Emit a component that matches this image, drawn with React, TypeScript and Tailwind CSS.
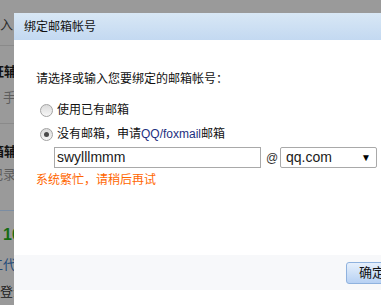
const font = "font-['Liberation_Sans','Noto_Sans_CJK_SC',sans-serif]";

function Radio({ checked }: { checked?: boolean }) {
  return (
    <span className="flex h-[13px] w-[13px] shrink-0 items-center justify-center rounded-full border border-[#a3a3a3] bg-gradient-to-b from-[#dadada] to-[#f7f7f7]">
      {checked && <span className="h-[5px] w-[5px] rounded-full bg-[#4a4a4a]" />}
    </span>
  );
}

export default function App() {
  return (
    <div className={`flex h-[305px] w-[381px] flex-col overflow-hidden bg-[#9a9a9a] ${font}`}>
      <div className="h-[13px] shrink-0" />
      <div className="flex min-h-0 flex-1">
        {/* page behind the overlay */}
        <div className="flex w-[14px] shrink-0 flex-col overflow-hidden whitespace-nowrap">
          <div className="flex h-[24px] justify-end pr-[1px] text-[13px] leading-[24px] text-[#2c2c2c]">输入</div>
          <div className="mt-[8px] h-px bg-[#8a8a8a]" />
          <div className="ml-[-9px] mt-[16px] h-[20px] text-[13px] font-bold leading-[20px] text-[#111]">证辅导</div>
          <div className="ml-[3px] mt-[6px] h-[20px] text-[13px] leading-[20px] text-[#5e5e5e]">手机</div>
          <div className="mt-[15px] h-px bg-[#8a8a8a]" />
          <div className="ml-[-9px] mt-[18px] h-[20px] text-[13px] font-bold leading-[20px] text-[#111]">箱辅导</div>
          <div className="ml-[-10px] mt-[3px] h-[20px] text-[13px] leading-[20px] text-[#5e5e5e]">记录</div>
          <div className="mt-[25px] h-px bg-[#7b8da3]" />
          <div className="ml-[3px] mt-[14px] h-[20px] text-[16px] font-bold leading-[20px] text-[#166b12]">10</div>
          <div className="ml-[-10px] mt-[10px] h-[20px] text-[13px] leading-[20px] text-[#1f4a78]">工代</div>
          <div className="mt-[7px] h-[20px] text-[13px] leading-[20px] text-[#1a1a1a]">登录</div>
        </div>

        {/* dialog */}
        <div className="min-w-0 flex-1 overflow-hidden">
          <div className="flex h-full w-[404px] flex-col bg-white">
            <div className="flex h-[27px] shrink-0 items-center bg-gradient-to-b from-[#d8e7f5] to-[#c3d9f1] pl-[10px] text-[12px] text-[#111]">
              绑定邮箱帐号
            </div>

            <div className="flex h-[215px] shrink-0 flex-col pl-[22px] text-[12px] text-[#111]">
              <p className="mt-[31px] h-[16px] leading-[16px]">请选择或输入您要绑定的邮箱帐号：</p>

              <label className="mt-[13px] flex h-[20px] items-center gap-[4px] pl-[4px]">
                <Radio />
                <span>使用已有邮箱</span>
              </label>
              <label className="mt-[4px] flex h-[20px] items-center gap-[4px] pl-[4px]">
                <Radio checked />
                <span>
                  没有邮箱，申请<span className="text-[#1d2f80]">QQ/foxmail</span>邮箱
                </span>
              </label>

              <div className="mt-[3px] flex h-[21px] items-center pl-[18px]">
                <div className="flex h-[21px] w-[207px] items-center border border-[#a9a9a9] pl-[2px] text-[14px] text-[#1a1a1a]">
                  swylllmmm
                </div>
                <span className="ml-[5px] w-[12px] text-[12px] text-[#333]">@</span>
                <div className="ml-[2px] flex h-[21px] w-[97px] items-center justify-between rounded-[2px] border border-[#a9a9a9] pl-[5px] pr-[5px] text-[14px] text-[#1a1a1a]">
                  <span>qq.com</span>
                  <span className="text-[10px] text-black">▼</span>
                </div>
              </div>

              <p className="mt-[4px] h-[16px] leading-[16px] text-[#ff6600]">系统繁忙，请稍后再试</p>
            </div>

            <div className="flex h-[35px] shrink-0 items-center justify-end bg-[#f7f8fa] pr-[12px]">
              <button className="h-[22px] w-[60px] rounded-[3px] border border-[#8fb2de] bg-gradient-to-b from-[#e6f0fc] to-[#b7d1f3] pl-[12px] text-left text-[13px] text-[#111]">
                确定
              </button>
            </div>
            <div className="flex-1 bg-white" />
          </div>
        </div>
      </div>
    </div>
  );
}
